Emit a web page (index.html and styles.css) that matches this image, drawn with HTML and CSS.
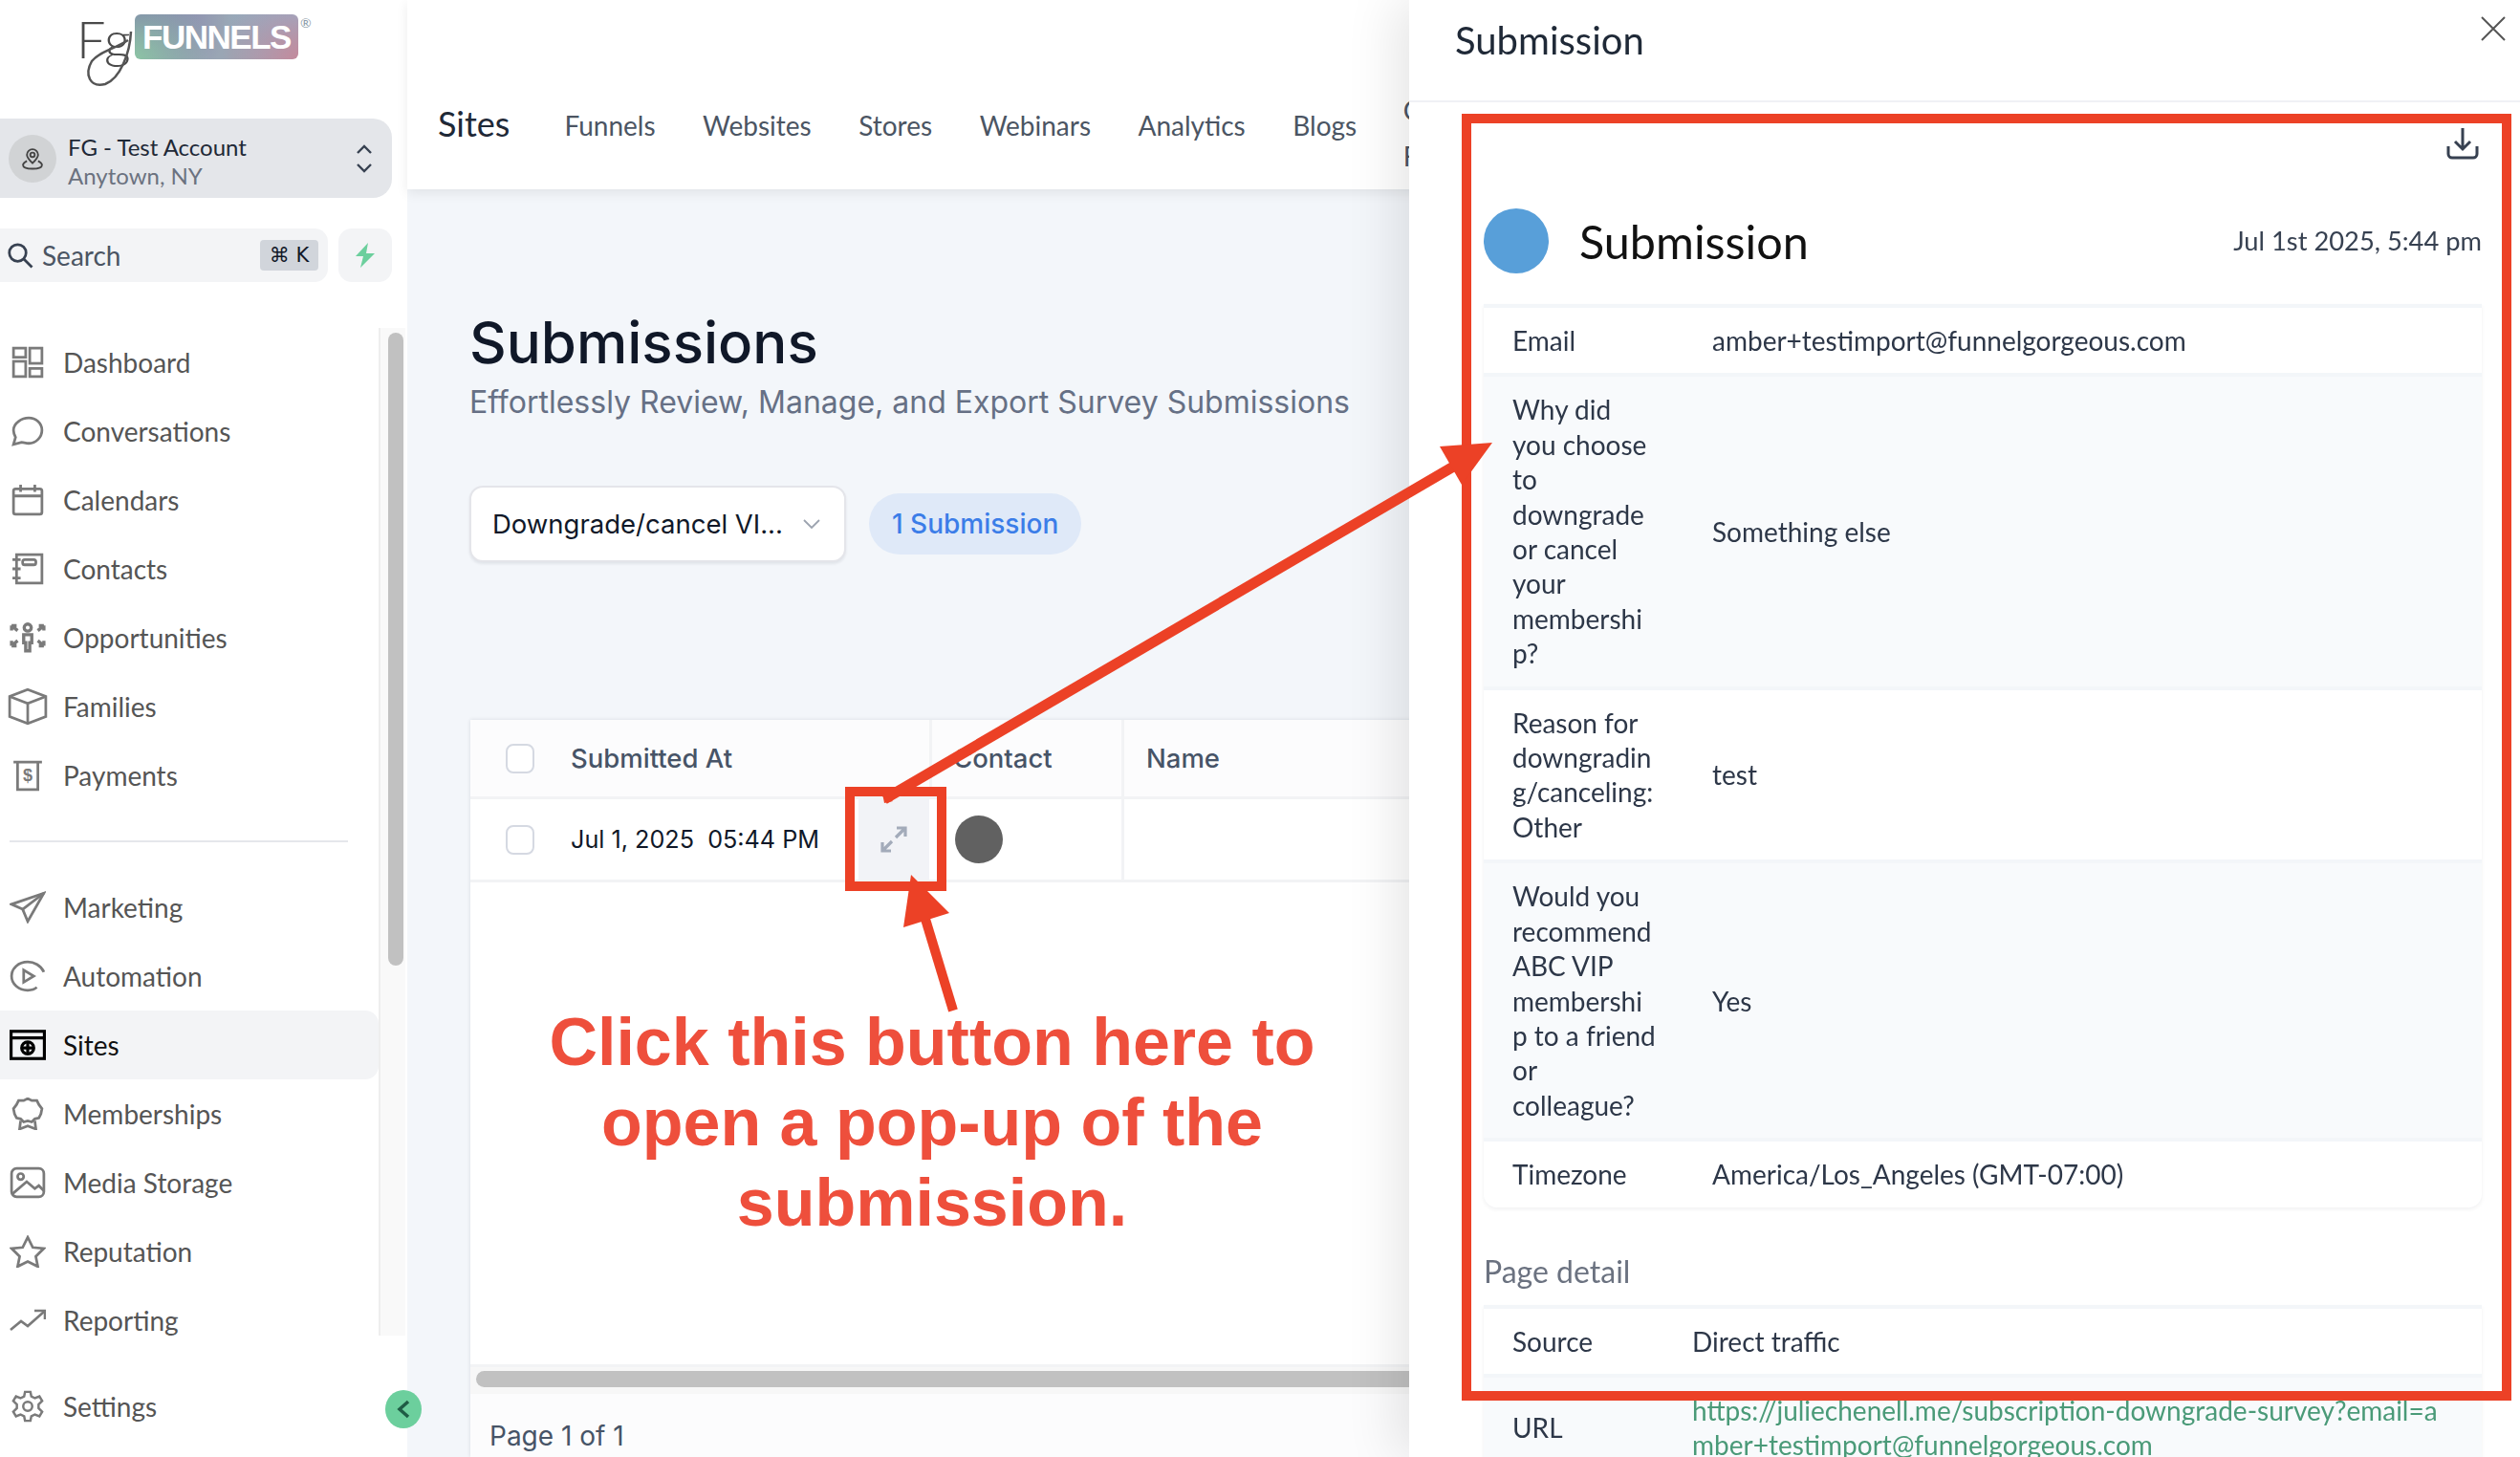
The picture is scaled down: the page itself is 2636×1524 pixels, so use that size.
FILE: index.html
```html
<!DOCTYPE html>
<html lang="en">
<head>
    <meta charset="UTF-8">
    <title>Submissions</title>
    <link rel="stylesheet" href="styles.css">
</head>
<body>
    <aside class="sidebar">
        <div class="logo">
            <span class="logo-fg">Fg</span>
            <span class="logo-badge">FUNNELS</span>
            <span class="logo-reg">®</span>
            <svg class="logo-loop" width="62" height="64" viewBox="0 0 62 64" fill="none" stroke="#555" stroke-width="2.500"><path d="M57 3C56 25 46 52 30 58C14 62 8 48 16 34C24 24 38 22 54 12"/></svg>
        </div>

        <div class="account">
            <span class="account-avatar">
                <svg width="28" height="28" viewBox="0 0 24 24" fill="none" stroke="#444" stroke-width="1.600"><circle cx="12" cy="8.500" r="2"/><path d="M12 16c-3-3-5-5-5-7.500a5 5 0 0 1 10 0C17 11 15 13 12 16z"/><path d="M7 14c-2 1-3.500 2-3.500 3.500C3.500 20 8 21 12 21s8.500-1 8.500-3.500c0-1.500-1.500-2.500-3.500-3.500"/></svg>
            </span>
            <div class="account-text">
                <div class="account-name">FG - Test Account</div>
                <div class="account-place">Anytown, NY</div>
            </div>
            <svg class="account-chevrons" width="18" height="34" viewBox="0 0 18 34" fill="none" stroke="#374151" stroke-width="2.400"><path d="M2 11l7-7 7 7"/><path d="M2 23l7 7 7-7"/></svg>
        </div>

        <div class="search-row">
            <div class="search">
                <svg width="30" height="30" viewBox="0 0 24 24" fill="none" stroke="#374151" stroke-width="2.200"><circle cx="10" cy="10" r="7"/><path d="M15 15l7 7"/></svg>
                <span class="search-label">Search</span>
                <span class="search-key">⌘ K</span>
            </div>
            <div class="bolt">
                <svg width="24" height="26" viewBox="0 0 24 26" fill="#6ccf9d"><path d="M15 0L2 14h8l-3 12 15-15h-9z"/></svg>
            </div>
        </div>

        <div class="nav-area">
            <nav class="nav-list">
                <a class="nav-item">
                    <svg class="nav-icon" viewBox="0 0 32 32"><rect x="2" y="2" width="12" height="9"/><rect x="18" y="2" width="12" height="15"/><rect x="2" y="15" width="12" height="15"/><rect x="18" y="22" width="12" height="8"/></svg>
                    Dashboard
                </a>
                <a class="nav-item">
                    <svg class="nav-icon" viewBox="0 0 32 32"><path d="M17 3c7 0 13 5 13 12s-6 13-13 13c-3 0-5-1-7-1l-8 2 2-7c-1-2-2-5-2-7C2 8 10 3 17 3z"/></svg>
                    Conversations
                </a>
                <a class="nav-item">
                    <svg class="nav-icon" viewBox="0 0 32 32"><rect x="2" y="5" width="28" height="25" rx="2"/><path d="M2 12h28M9 1v7M23 1v7"/></svg>
                    Calendars
                </a>
                <a class="nav-item">
                    <svg class="nav-icon" viewBox="0 0 32 32"><path d="M5 2h25v28H5z"/><rect x="11" y="7" width="13" height="5" rx="2"/><path d="M1 7h8M1 16h8M1 25h8"/></svg>
                    Contacts
                </a>
                <a class="nav-item">
                    <svg class="nav-icon nav-icon-wide nav-icon-bold" viewBox="0 0 36 32"><circle cx="18" cy="6" r="3.500"/><path d="M14 13h8v8h-2v8h-4v-8h-2z"/><path d="M2 4l6 5M2 4v5M2 4h5M34 4l-6 5M34 4v5M34 4h-5M2 24l6-5M2 24v-5M2 24h5M34 24l-6-5M34 24v-5M34 24h-5"/></svg>
                    Opportunities
                </a>
                <a class="nav-item">
                    <svg class="nav-icon nav-icon-cube" viewBox="0 0 40 38"><path d="M20 2l18 7v20l-18 7-18-7V9z"/><path d="M2 9l18 7 18-7M20 16v20"/></svg>
                    Families
                </a>
                <a class="nav-item">
                    <svg class="nav-icon" viewBox="0 0 32 32"><path d="M2 3h28M6 3v27h20V3"/><text x="16" y="22" class="nav-icon-text">$</text></svg>
                    Payments
                </a>
                <div class="nav-divider"></div>
                <a class="nav-item">
                    <svg class="nav-icon nav-icon-wide" viewBox="0 0 36 32"><path d="M34 2L2 13l11 5 5 12z"/><path d="M13 18L34 2"/></svg>
                    Marketing
                </a>
                <a class="nav-item">
                    <svg class="nav-icon nav-icon-wide" viewBox="0 0 36 32"><path d="M34 12C31 5 24 2 18 2 9 2 2 8 2 16s7 14 16 14c4 0 7-1 9-3"/><path d="M14 10l10 6-10 6z"/></svg>
                    Automation
                </a>
                <a class="nav-item nav-item-active">
                    <svg class="nav-icon nav-icon-wide nav-icon-dark" viewBox="0 0 36 30"><rect x="1.500" y="1.500" width="33" height="27"/><path d="M1.500 8h33"/><circle cx="18" cy="18" r="6"/><path d="M12 18h12M18 12v12"/></svg>
                    Sites
                </a>
                <a class="nav-item">
                    <svg class="nav-icon" viewBox="0 0 32 32"><path d="M16 1l4 2 5 0 2 4 3 4-1 5-2 4-4 1-3 3-4-1-4 1-3-3-4-1-2-4-1-5 3-4 2-4 5 0z"/><path d="M9 23l-1 8 8-3 8 3-1-8"/></svg>
                    Memberships
                </a>
                <a class="nav-item">
                    <svg class="nav-icon nav-icon-wide" viewBox="0 0 36 32"><rect x="2" y="2" width="32" height="28" rx="5"/><circle cx="11" cy="10" r="3"/><path d="M3 27l14-12 8 7 4-3 5 5"/></svg>
                    Media Storage
                </a>
                <a class="nav-item">
                    <svg class="nav-icon nav-icon-wide" viewBox="0 0 36 32"><path d="M18 2l5 10 11 1-8 8 2 10-10-5-10 5 2-10-8-8 11-1z"/></svg>
                    Reputation
                </a>
                <a class="nav-item">
                    <svg class="nav-icon nav-icon-wide" viewBox="0 0 38 26"><path d="M1 23l11-9 7 5L36 4"/><path d="M26 3h11v9"/></svg>
                    Reporting
                </a>
            </nav>
            <div class="nav-scroll"><div class="nav-thumb"></div></div>
        </div>

        <a class="nav-item nav-settings">
            <svg class="nav-icon nav-icon-wide" viewBox="0 0 36 36"><circle cx="18" cy="18" r="5"/><path d="M15 2h6l1 5 4 2 5-2 3 5-4 4v4l4 4-3 5-5-2-4 2-1 5h-6l-1-5-4-2-5 2-3-5 4-4v-4l-4-4 3-5 5 2 4-2z"/></svg>
            Settings
        </a>
        <span class="collapse">
            <svg width="16" height="20" viewBox="0 0 16 20" fill="none" stroke="#1f5c45" stroke-width="3.500"><path d="M13 2L4 10l9 8"/></svg>
        </span>
    </aside>

    <div class="main">
        <header class="topnav">
            <span class="topnav-title">Sites</span>
            <div class="topnav-tabs">
                <a>Funnels</a>
                <a>Websites</a>
                <a>Stores</a>
                <a>Webinars</a>
                <a>Analytics</a>
                <a>Blogs</a>
                <div class="topnav-more">
                    <a>Client Portal</a>
                    <a>Forms</a>
                </div>
            </div>
        </header>

        <section class="content">
            <h1>Submissions</h1>
            <p class="subtitle">Effortlessly Review, Manage, and Export Survey Submissions</p>

            <div class="filters">
                <div class="select">
                    <span>Downgrade/cancel VI...</span>
                    <svg width="20" height="12" viewBox="0 0 20 12" fill="none" stroke="#9ca3af" stroke-width="1.800"><path d="M2 2l8 8 8-8"/></svg>
                </div>
                <span class="badge">1 Submission</span>
            </div>

            <div class="table-card">
                <div class="table-row table-head">
                    <div class="col-date">
                        <span class="checkbox"></span>
                        <span>Submitted At</span>
                    </div>
                    <div class="col-contact">Contact</div>
                    <div class="col-name">Name</div>
                </div>
                <div class="table-row table-body">
                    <div class="col-date">
                        <span class="checkbox"></span>
                        <span class="date-text">Jul 1, 2025&nbsp; 05:44 PM</span>
                        <span class="expand">
                            <svg width="28" height="28" viewBox="0 0 28 28" fill="none" stroke="#a3abba" stroke-width="3.200"><path d="M16 12L26 2M17 2h9v9"/><path d="M12 16L2 26M2 17v9h9"/></svg>
                        </span>
                    </div>
                    <div class="col-contact"><span class="contact-dot"></span></div>
                    <div class="col-name"></div>
                </div>
                <div class="table-empty"></div>
                <div class="table-scroll"><div class="table-thumb"></div></div>
                <div class="table-foot">Page 1 of 1</div>
            </div>
        </section>
    </div>

    <aside class="drawer">
        <div class="drawer-head">
            <span>Submission</span>
            <svg class="drawer-close" width="26" height="26" viewBox="0 0 26 26" fill="none" stroke="#555" stroke-width="2"><path d="M1 1l24 24M25 1L1 25"/></svg>
        </div>
        <div class="drawer-body">
            <div class="download-row">
                <svg width="34" height="34" viewBox="0 0 34 34" fill="none" stroke="#374151" stroke-width="3"><path d="M17 1v22M9 15l8 8 8-8"/><path d="M2 20v8a4 4 0 0 0 4 4h22a4 4 0 0 0 4-4v-8"/></svg>
            </div>
            <div class="sub-head">
                <span class="sub-dot"></span>
                <span class="sub-title">Submission</span>
                <span class="sub-date">Jul 1st 2025, 5:44 pm</span>
            </div>

            <div class="rows">
                <div class="row"><div class="row-label">Email</div><div>amber+testimport@funnelgorgeous.com</div></div>
                <div class="row"><div class="row-label">Why did you choose to downgrade or cancel your membership?</div><div>Something else</div></div>
                <div class="row"><div class="row-label">Reason for downgrading/canceling: Other</div><div>test</div></div>
                <div class="row"><div class="row-label">Would you recommend ABC VIP membership to a friend or colleague?</div><div>Yes</div></div>
                <div class="row"><div class="row-label">Timezone</div><div>America/Los_Angeles (GMT-07:00)</div></div>
            </div>

            <div class="section-title">Page detail</div>

            <div class="rows rows-page">
                <div class="row"><div class="row-label">Source</div><div>Direct traffic</div></div>
                <div class="row"><div class="row-label">URL</div><a class="row-link">https://juliechenell.me/subscription-downgrade-survey?email=amber+testimport@funnelgorgeous.com</a></div>
            </div>
        </div>
    </aside>

    <!-- red callouts drawn on top of the screenshot -->
    <svg class="callouts" width="2636" height="1524" viewBox="0 0 2636 1524" fill="none">
        <rect x="1534" y="124" width="1088" height="1336" stroke="#ec4126" stroke-width="10"/>
        <rect x="889" y="828" width="96" height="99" stroke="#ec4126" stroke-width="10"/>
        <path d="M925 836L1522 487" stroke="#ec4126" stroke-width="11"/>
        <path d="M1506 467L1561 463L1529 507z" fill="#ec4126"/>
        <path d="M923 829L934 838L925 840z" fill="#ec4126"/>
        <path d="M997 1057L967 958" stroke="#ec4126" stroke-width="10"/>
        <path d="M953 915L993 955L945 970z" fill="#ec4126"/>
    </svg>
    <div class="callout-text">Click this button here to<br>open a pop-up of the<br>submission.</div>
</body>
</html>
```

FILE: styles.css
```css
* {
    box-sizing: border-box;
}

html, body {
    margin: 0;
    height: 100%;
    overflow: hidden;
}

body {
    display: flex;
    font-family: "Lato", sans-serif;
    background: #f3f6fa;
    color: #1f2937;
}

/* sidebar */
.sidebar {
    position: relative;
    width: 426px;
    flex-shrink: 0;
    display: flex;
    flex-direction: column;
    background: white;
}

.logo {
    position: relative;
    height: 124px;
    display: flex;
    align-items: flex-start;
    padding: 15px 0 0 82px;
}

.logo-fg {
    width: 59px;
    margin-left: -2px;
    margin-right: 2px;
    font-size: 54px;
    line-height: 52px;
    font-weight: 300;
    letter-spacing: 1px;
    color: #4a4a4a;
}

.logo-badge {
    width: 171px;
    height: 47px;
    border-radius: 6px;
    text-align: center;
    font-family: "Liberation Sans", sans-serif;
    font-weight: bold;
    font-size: 35px;
    letter-spacing: -1.500px;
    line-height: 47px;
    color: white;
    background:
        radial-gradient(circle at 0% 100%, #8cc4a4 0, transparent 45%),
        radial-gradient(circle at 100% 100%, #c48a9c 0, transparent 45%),
        radial-gradient(circle at 100% 0%, #8fb3cf 0, transparent 45%),
        radial-gradient(circle at 0% 0%, #7f78ad 0, transparent 55%),
        #9aa6b4;
}

.logo-reg {
    margin: 0 0 0 2px;
    font-size: 14px;
    color: #8a9aa8;
}

.logo-loop {
    position: absolute;
    left: 80px;
    top: 30px;
}

.account {
    height: 83px;
    width: 410px;
    display: flex;
    align-items: center;
    padding: 0 20px 0 9px;
    background: #e4e6ea;
    border-radius: 0 20px 20px 0;
}

.account-avatar {
    width: 50px;
    height: 50px;
    border-radius: 50%;
    background: #d1d3d5;
    display: flex;
    align-items: center;
    justify-content: center;
}

.account-text {
    flex: 1;
    margin-left: 12px;
    padding-top: 6px;
    font-size: 24px;
    line-height: 30px;
}

.account-place {
    color: #6b7280;
}

.search-row {
    display: flex;
    gap: 11px;
    width: 410px;
    margin-top: 32px;
}

.search {
    flex: 1;
    height: 56px;
    display: flex;
    align-items: center;
    padding: 0 10px 0 6px;
    background: #f3f4f6;
    border-radius: 0 14px 14px 0;
}

.search-label {
    flex: 1;
    margin-left: 8px;
    font-size: 28px;
    color: #4b5563;
}

.search-key {
    width: 61px;
    height: 32px;
    border-radius: 4px;
    background: #d1d5db;
    text-align: center;
    font-family: "DejaVu Sans", sans-serif;
    font-size: 21px;
    line-height: 32px;
    color: #111827;
}

.bolt {
    width: 56px;
    height: 56px;
    display: flex;
    align-items: center;
    justify-content: center;
    background: #f3f4f6;
    border-radius: 14px;
}

.nav-area {
    flex: 1;
    display: flex;
    margin-top: 48px;
    min-height: 0;
    max-height: 1054px;
    overflow: hidden;
}

.nav-list {
    width: 396px;
    flex-shrink: 0;
}

.nav-item {
    height: 72px;
    display: flex;
    align-items: center;
    gap: 20px;
    padding-left: 12px;
    font-size: 28px;
    line-height: 28px;
    color: #555;
}

.nav-item-active {
    background: #f3f4f6;
    border-radius: 0 14px 14px 0;
    color: #111;
}

.nav-icon {
    width: 34px;
    height: 34px;
    flex-shrink: 0;
    fill: none;
    stroke: #7a7a7a;
    stroke-width: 2.600;
}

.nav-icon-wide {
    width: 38px;
    margin-left: -2px;
    margin-right: -2px;
}

.nav-icon-cube {
    width: 42px;
    height: 40px;
    margin-left: -4px;
    margin-right: -4px;
}

.nav-icon-bold {
    stroke-width: 3.200;
}

.nav-icon-dark {
    stroke: black;
    stroke-width: 3;
}

.nav-icon-text {
    fill: #7a7a7a;
    stroke: none;
    font-family: "Liberation Sans", sans-serif;
    font-weight: bold;
    font-size: 17px;
    text-anchor: middle;
}

.nav-divider {
    height: 2px;
    width: 354px;
    margin: 32px 0 32px 10px;
    background: #e5e7eb;
}

.nav-scroll {
    width: 28px;
    padding: 5px 4px 0 8px;
    background: #f9f9f9;
    border-left: 2px solid #eeeeee;
}

.nav-thumb {
    width: 16px;
    height: 662px;
    border-radius: 8px;
    background: #c1c1c1;
}

.nav-settings {
    margin-top: 38px;
}

.collapse {
    position: absolute;
    left: 403px;
    top: 1454px;
    width: 38px;
    height: 40px;
    border-radius: 50%;
    background: #6ccf9d;
    display: flex;
    align-items: center;
    justify-content: center;
}

/* main column */
.main {
    flex: 1;
    min-width: 0;
    display: flex;
    flex-direction: column;
}

.topnav {
    height: 198px;
    flex-shrink: 0;
    display: flex;
    align-items: flex-start;
    padding: 105px 0 0 32px;
    background: white;
    box-shadow: 0 4px 12px rgba(0, 0, 0, 0.08);
    position: relative;
    white-space: nowrap;
}

.topnav-title {
    font-size: 36px;
    line-height: 48px;
    color: #1f2937;
}

.topnav-tabs {
    display: flex;
    align-items: flex-start;
    gap: 49.500px;
    margin: 8px 0 0 57px;
    font-size: 28px;
    line-height: 36px;
    color: #4b5563;
}

.topnav-more {
    display: flex;
    flex-direction: column;
    gap: 12px;
    margin-top: -16px;
    margin-left: -1px;
}

.content {
    flex: 1;
    min-height: 0;
    display: flex;
    flex-direction: column;
    padding: 126px 0 0 65px;
    font-family: "Inter", sans-serif;
}

h1 {
    margin: 0;
    font-size: 60px;
    line-height: 68px;
    font-weight: 500;
    color: #101828;
}

.subtitle {
    margin: 9px 0 0;
    font-size: 32px;
    line-height: 40px;
    color: #667085;
}

.filters {
    display: flex;
    align-items: center;
    gap: 24px;
    margin-top: 67px;
}

.select {
    width: 394px;
    height: 80px;
    display: flex;
    align-items: center;
    justify-content: space-between;
    padding: 0 24px 0 22px;
    background: white;
    border: 2px solid #e4e5ea;
    border-radius: 14px;
    box-shadow: 0 2px 3px rgba(16, 24, 40, 0.08);
    font-size: 27.500px;
    color: #101828;
}

.badge {
    height: 64px;
    padding: 0 24px;
    display: flex;
    align-items: center;
    border-radius: 32px;
    background: #dfe9f8;
    font-size: 28px;
    font-weight: 500;
    color: #3b7de8;
}

.table-card {
    flex: 1;
    min-height: 0;
    margin-top: 165px;
    margin-left: 1px;
    display: flex;
    flex-direction: column;
    background: white;
    box-shadow: 0 0 4px rgba(16, 24, 40, 0.12);
}

.table-row {
    display: flex;
}

.table-head {
    height: 83px;
    background: #fcfcfd;
    border-bottom: 3px solid #f2f3f5;
    font-size: 27.500px;
    font-weight: 500;
    color: #475467;
}

.table-body {
    height: 87px;
    border-bottom: 3px solid #f2f3f5;
    font-size: 25.200px;
    color: #101828;
}

.col-date {
    width: 480px;
    display: flex;
    align-items: center;
    padding-left: 37px;
}

.checkbox {
    width: 30px;
    height: 31px;
    margin-right: 38px;
    border: 2px solid #d5d9e2;
    border-radius: 8px;
    background: white;
}

.date-text {
    width: 301px;
    flex-shrink: 0;
    white-space: nowrap;
}

.expand {
    width: 74px;
    align-self: stretch;
    flex-shrink: 0;
    display: flex;
    align-items: center;
    justify-content: center;
    background: #f2f3f7;
}

.col-contact {
    width: 201px;
    display: flex;
    align-items: center;
    padding-left: 22px;
    border-left: 3px solid #f2f3f5;
}

.table-body .col-contact {
    padding-left: 27px;
    border-left: none;
}

.col-name {
    flex: 1;
    display: flex;
    align-items: center;
    padding-left: 23px;
    border-left: 3px solid #f2f3f5;
}

.contact-dot {
    width: 50px;
    height: 50px;
    border-radius: 50%;
    background: #616161;
}

.table-empty {
    flex: 1;
    border-bottom: 3px solid #f2f3f5;
}

.table-scroll {
    height: 28px;
    padding: 4px 0 0 6px;
    background: #f7f7f7;
}

.table-thumb {
    height: 17px;
    border-radius: 9px;
    background: #c1c1c1;
}

.table-foot {
    height: 66px;
    padding-left: 20px;
    background: #fcfcfd;
    font-size: 28px;
    line-height: 88px;
    color: #475467;
}

/* drawer */
.drawer {
    position: fixed;
    top: 0;
    right: 0;
    bottom: 0;
    width: 1162px;
    display: flex;
    flex-direction: column;
    background: white;
    box-shadow: -14px 0 50px rgba(0, 0, 0, 0.1);
}

.drawer-head {
    height: 107px;
    flex-shrink: 0;
    display: flex;
    justify-content: space-between;
    padding: 17px 15px 0 48px;
    border-bottom: 2px solid #f0f1f5;
    font-size: 40px;
    line-height: 50px;
    color: #1f2937;
}

.drawer-body {
    flex: 1;
    min-height: 0;
    padding: 0 40px 0 78px;
    font-size: 28px;
    line-height: 36.400px;
    color: #2d3748;
}

.download-row {
    display: flex;
    justify-content: flex-end;
    margin-top: 26px;
    padding-right: 3px;
}

.sub-head {
    display: flex;
    align-items: center;
    margin-top: 51px;
}

.sub-dot {
    width: 68px;
    height: 68px;
    border-radius: 50%;
    background: #589fd9;
}

.sub-title {
    flex: 1;
    margin-left: 32px;
    font-size: 48.500px;
    line-height: 68px;
    color: #111;
}

.sub-date {
    font-size: 27.300px;
    color: #374151;
}

.rows {
    display: flex;
    flex-direction: column;
    gap: 4px;
    margin-top: 32px;
    padding-top: 4px;
    background: #f3f6f9;
    border-radius: 0 0 14px 14px;
    box-shadow: 0 2px 4px rgba(16, 24, 40, 0.06);
}

.row {
    display: grid;
    grid-template-columns: 239px 1fr;
    align-items: center;
    padding: 16px 30px 16px 0;
}

.row:nth-child(odd) {
    background: white;
}

.row:nth-child(even) {
    background: #f8fafc;
}

.row:last-child {
    border-radius: 0 0 14px 14px;
}

.row-label {
    margin-left: 30px;
    width: 151px;
    overflow-wrap: anywhere;
}

.rows-page {
    margin-top: 15px;
}

.rows-page .row {
    grid-template-columns: 218px 1fr;
}

.row-link {
    color: #4a9a78;
    word-break: break-all;
}

.section-title {
    margin-top: 47px;
    font-size: 32px;
    line-height: 40px;
    color: #6b7280;
}

/* callouts */
.callouts {
    position: fixed;
    top: 0;
    left: 0;
}

.callout-text {
    position: fixed;
    left: 475px;
    top: 1048px;
    width: 1000px;
    text-align: center;
    font-family: "Liberation Sans", sans-serif;
    font-weight: bold;
    font-size: 70px;
    line-height: 84px;
    color: #ee4f3c;
}
```
